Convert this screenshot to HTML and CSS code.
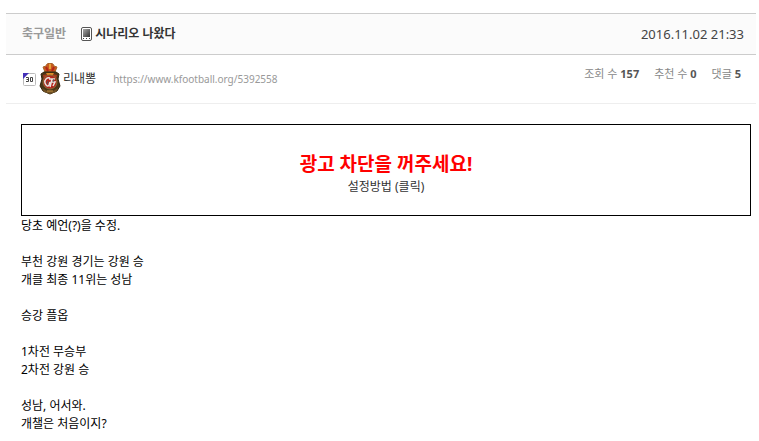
FILE: index.html
```html
<!DOCTYPE html>
<html lang="ko">
<head>
    <meta charset="UTF-8">
    <meta name="viewport" content="width=device-width, initial-scale=1.0">
    <title>시나리오 나왔다</title>
    <link rel="stylesheet" href="styles.css">
</head>
<body>
    <article class="board-read">
        <header class="read-header">
            <a class="category" href="#">축구일반</a>
            <svg class="icon-mobile" viewBox="0 0 11 14" aria-hidden="true">
                <defs>
                    <linearGradient id="screen" x1="0" y1="0" x2="1" y2="1">
                        <stop offset="0" stop-color="#aaa"/>
                        <stop offset="1" stop-color="#333"/>
                    </linearGradient>
                </defs>
                <rect x=".5" y=".5" width="10" height="13" rx="1.5" fill="#fff" stroke="#555"/>
                <rect x="2" y="2" width="7" height="8" fill="url(#screen)"/>
                <path d="M2 11h1v1H2zM5 11h1v1H5zM8 11h1v1H8z" fill="#444"/>
            </svg>
            <h1 class="title"><a href="#">시나리오 나왔다</a></h1>
            <time class="date">2016.11.02 21:33</time>
        </header>

        <div class="read-meta">
            <svg class="icon-level" viewBox="0 0 13 13" role="img" aria-label="레벨 30">
                <rect x=".5" y=".5" width="12" height="12" rx="1" fill="#fff" stroke="#bbb"/>
                <path d="M0 0h6L0 6z" fill="#4330b8"/>
                <path d="M3 4.5h2.5v4H3M3.5 6.5h2M7.5 4.5h2v4h-2z" fill="none" stroke="#444"/>
            </svg>
            <svg class="icon-team" viewBox="0 0 22 32" aria-hidden="true">
                <path d="M4 4l3-1 1-2 3-1 3 1 1 2 3 1-2 5H6z" fill="#c9591c" stroke="#a5642a"/>
                <path d="M7 4l2 4M15 4l-2 4" stroke="#b3241a" stroke-width="2"/>
                <path d="M11 1v5" stroke="#e8a33a" stroke-width="2"/>
                <path d="M5 9h12l3 2-1 5 2 7-3 5-7 3-7-3-3-5 2-7-1-5z" fill="#4a3618" stroke="#33240f"/>
                <path d="M4 12l5-1h4l5 1-1 5H5z" fill="#a83a1c"/>
                <path d="M7 10h8l-2 3H9z" fill="#dc8f2a"/>
                <circle cx="11" cy="19" r="7" fill="#b3261d" stroke="#8a6a35"/>
                <path d="M11 15c-3-1-6 2-5 5s3 4 4 2l1-3M10 16h6M13 16l-2 8M13 19h3l-2 4" fill="none" stroke="#e9e4df" stroke-width="1.5"/>
                <path d="M9 18l-1 3M15 16l-1 3" stroke="#555"/>
                <path d="M3 25l5 3h6l5-3-2 4-6 2-6-2z" fill="#6f5124"/>
                <path d="M8 28h6" stroke="#c28e3c"/>
            </svg>
            <a class="author" href="#">리내뽕</a>
            <a class="link" href="#">https://www.kfootball.org/5392558</a>
            <ul class="counts">
                <li>조회 수 <b>157</b></li>
                <li>추천 수 <b>0</b></li>
                <li>댓글 <b>5</b></li>
            </ul>
        </div>

        <div class="read-body">
            <div class="notice">
                <strong class="notice-title">광고 차단을 꺼주세요!</strong>
                <a class="notice-link" href="#">설정방법 (클릭)</a>
            </div>
            <div class="post">
                <p>당초 예언(?)을 수정.</p>
                <p>부천 강원 경기는 강원 승<br>개클 최종 11위는 성남</p>
                <p>승강 플옵</p>
                <p>1차전 무승부<br>2차전 강원 승</p>
                <p>성남, 어서와.<br>개챌은 처음이지?</p>
            </div>
        </div>
    </article>
</body>
</html>
```

FILE: styles.css
```css
body {
    margin: 0;
    background: #fff;
    color: #000;
    font-family: "Noto Sans", "Noto Sans CJK KR", sans-serif;
    font-size: 12px;
    line-height: 18px;
}

a {
    color: inherit;
    text-decoration: none;
}

.board-read {
    margin: 13px 3px 0 6px;
}

.read-header {
    display: flex;
    align-items: center;
    height: 40px;
    padding: 0 12px 0 16px;
    background: #fbfbfb;
    border-top: 1px solid #ccc;
    border-bottom: 1px solid #ccc;
}

.category {
    margin-right: 15px;
    color: #999;
    font-weight: bold;
}

.icon-mobile {
    width: 11px;
    height: 14px;
    margin-right: 3px;
}

.title {
    margin: 0;
    color: #333;
    font-size: 12px;
}

.date {
    margin-left: auto;
    color: #444;
    font-size: 13px;
}

.read-meta {
    display: flex;
    align-items: center;
    height: 48px;
    padding: 0 15px 0 17px;
    border-bottom: 1px solid #eee;
}

.icon-level {
    width: 13px;
    height: 13px;
    margin-right: 3px;
}

.icon-team {
    width: 22px;
    height: 32px;
    margin-right: 2px;
}

.author {
    margin-right: 17px;
    color: #333;
}

.link {
    color: #999;
    font-size: 10px;
}

.counts {
    display: flex;
    gap: 15px;
    margin: 0 0 10px auto;
    padding: 0;
    list-style: none;
    color: #888;
    font-size: 11px;
}

.counts b {
    color: #555;
}

.read-body {
    padding: 20px 5px 0 15px;
}

.notice {
    display: flex;
    flex-direction: column;
    align-items: center;
    padding: 26px 0 19px;
    border: 1px solid #000;
}

.notice-title {
    color: #f00;
    font-size: 19px;
    line-height: 27px;
}

.notice-link {
    color: #333;
}

.post {
    padding-top: 1px;
}

.post p {
    margin: 0 0 18px;
}

.post p:last-child {
    margin-bottom: 0;
}
```
